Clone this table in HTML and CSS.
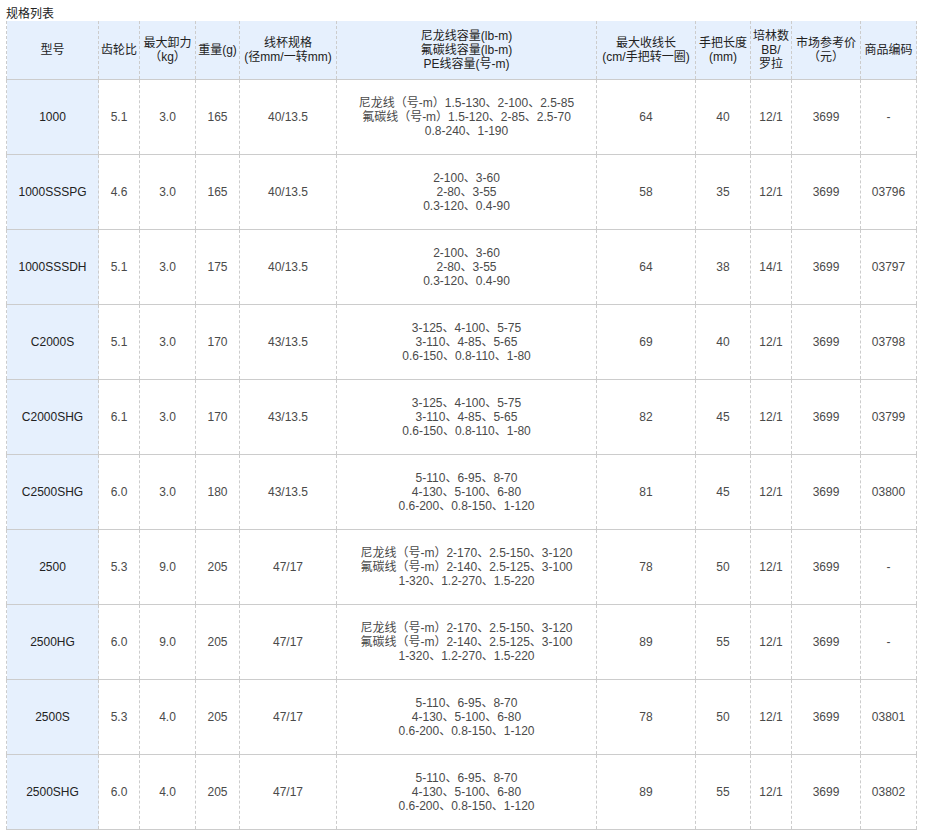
FILE: index.html
```html
<!DOCTYPE html>
<html lang="zh">
<head>
<meta charset="utf-8">
<title>规格列表</title>
<link rel="stylesheet" href="styles.css">
</head>
<body>
<div class="title">规格列表</div>
<table class="spec">
<colgroup>
<col class="c1"><col class="c2"><col class="c3"><col class="c4"><col class="c5"><col class="c6"><col class="c7"><col class="c8"><col class="c9"><col class="c10"><col class="c11">
</colgroup>
<thead>
<tr>
<th>型号</th>
<th>齿轮比</th>
<th>最大卸力<br>（kg）</th>
<th>重量(g)</th>
<th>线杯规格<br>(径mm/一转mm)</th>
<th>尼龙线容量(lb-m)<br>氟碳线容量(lb-m)<br>PE线容量(号-m)</th>
<th>最大收线长<br>(cm/手把转一圈)</th>
<th>手把长度<br>(mm)</th>
<th>培林数<br>BB/<br>罗拉</th>
<th>市场参考价<br>（元）</th>
<th>商品编码</th>
</tr>
</thead>
<tbody>
<tr><td class="model">1000</td><td>5.1</td><td>3.0</td><td>165</td><td>40/13.5</td><td>尼龙线（号-m）1.5-130、2-100、2.5-85<br>氟碳线（号-m）1.5-120、2-85、2.5-70<br>0.8-240、1-190</td><td>64</td><td>40</td><td>12/1</td><td>3699</td><td>-</td></tr>
<tr><td class="model">1000SSSPG</td><td>4.6</td><td>3.0</td><td>165</td><td>40/13.5</td><td>2-100、3-60<br>2-80、3-55<br>0.3-120、0.4-90</td><td>58</td><td>35</td><td>12/1</td><td>3699</td><td>03796</td></tr>
<tr><td class="model">1000SSSDH</td><td>5.1</td><td>3.0</td><td>175</td><td>40/13.5</td><td>2-100、3-60<br>2-80、3-55<br>0.3-120、0.4-90</td><td>64</td><td>38</td><td>14/1</td><td>3699</td><td>03797</td></tr>
<tr><td class="model">C2000S</td><td>5.1</td><td>3.0</td><td>170</td><td>43/13.5</td><td>3-125、4-100、5-75<br>3-110、4-85、5-65<br>0.6-150、0.8-110、1-80</td><td>69</td><td>40</td><td>12/1</td><td>3699</td><td>03798</td></tr>
<tr><td class="model">C2000SHG</td><td>6.1</td><td>3.0</td><td>170</td><td>43/13.5</td><td>3-125、4-100、5-75<br>3-110、4-85、5-65<br>0.6-150、0.8-110、1-80</td><td>82</td><td>45</td><td>12/1</td><td>3699</td><td>03799</td></tr>
<tr><td class="model">C2500SHG</td><td>6.0</td><td>3.0</td><td>180</td><td>43/13.5</td><td>5-110、6-95、8-70<br>4-130、5-100、6-80<br>0.6-200、0.8-150、1-120</td><td>81</td><td>45</td><td>12/1</td><td>3699</td><td>03800</td></tr>
<tr><td class="model">2500</td><td>5.3</td><td>9.0</td><td>205</td><td>47/17</td><td>尼龙线（号-m）2-170、2.5-150、3-120<br>氟碳线（号-m）2-140、2.5-125、3-100<br>1-320、1.2-270、1.5-220</td><td>78</td><td>50</td><td>12/1</td><td>3699</td><td>-</td></tr>
<tr><td class="model">2500HG</td><td>6.0</td><td>9.0</td><td>205</td><td>47/17</td><td>尼龙线（号-m）2-170、2.5-150、3-120<br>氟碳线（号-m）2-140、2.5-125、3-100<br>1-320、1.2-270、1.5-220</td><td>89</td><td>55</td><td>12/1</td><td>3699</td><td>-</td></tr>
<tr><td class="model">2500S</td><td>5.3</td><td>4.0</td><td>205</td><td>47/17</td><td>5-110、6-95、8-70<br>4-130、5-100、6-80<br>0.6-200、0.8-150、1-120</td><td>78</td><td>50</td><td>12/1</td><td>3699</td><td>03801</td></tr>
<tr><td class="model">2500SHG</td><td>6.0</td><td>4.0</td><td>205</td><td>47/17</td><td>5-110、6-95、8-70<br>4-130、5-100、6-80<br>0.6-200、0.8-150、1-120</td><td>89</td><td>55</td><td>12/1</td><td>3699</td><td>03802</td></tr>
</tbody>
</table>
</body>
</html>
```
FILE: styles.css
```css
html, body {
  margin: 0;
  padding: 0;
  background: #fff;
}
body {
  padding: 0 6px;
  font-family: "Liberation Sans", Arial, "Noto Sans CJK SC", sans-serif;
  font-size: 12px;
  color: #333;
}
.title {
  height: 21px;
  line-height: 14px;
  padding-top: 7px;
  box-sizing: border-box;
  color: #222;
}
.spec {
  border-collapse: collapse;
  table-layout: fixed;
  width: 910px;
}
.c1 { width: 92px; }
.c2 { width: 41px; }
.c3 { width: 56px; }
.c4 { width: 44px; }
.c5 { width: 97px; }
.c6 { width: 260px; }
.c7 { width: 99px; }
.c8 { width: 55px; }
.c9 { width: 41px; }
.c10 { width: 69px; }
.c11 { width: 56px; }
.spec th,
.spec td {
  border-left: 1px dashed #ccc;
  border-right: 1px dashed #ccc;
  padding: 0;
  text-align: center;
  vertical-align: middle;
  line-height: 14px;
  font-weight: normal;
}
.spec th {
  background: #e6f0fd;
  color: #222;
  height: 58px;
  border-bottom: 1px solid #ccc;
}
.spec td {
  height: 74px;
  border-bottom: 1px solid #ccc;
  color: #4a4a4a;
}
.spec td.model {
  background: #e6f0fd;
  color: #222;
}
```
